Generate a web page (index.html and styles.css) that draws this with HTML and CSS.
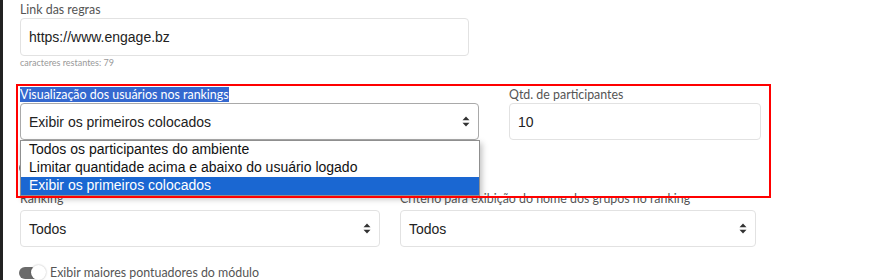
FILE: index.html
```html
<!DOCTYPE html>
<html lang="pt-BR">
<head>
    <meta charset="UTF-8">
    <meta name="viewport" content="width=device-width, initial-scale=1.0">
    <title>Configurações do ranking</title>
    <link rel="stylesheet" href="styles.css">
</head>
<body>
    <div class="pagina">
        <div class="barra-lateral"></div>
        <div class="conteudo">
            <div class="campo campo-link">
                <label class="rotulo" for="link">Link das regras</label>
                <div class="caixa caixa-link">https://www.engage.bz</div>
                <small class="contador">caracteres restantes: 79</small>
            </div>

            <div class="secao-destaque">
                <div class="linha linha-visualizacao">
                    <div class="campo">
                        <label class="rotulo"><span class="selecionado">Visualização dos usuários nos rankings</span></label>
                        <div class="caixa caixa-select focada">
                            <span>Exibir os primeiros colocados</span>
                            <svg class="setas" width="8" height="11" viewBox="0 0 8 11"><path d="M4 0.5 L7.5 4.2 H0.5 Z M4 10.5 L7.5 6.8 H0.5 Z" fill="#333"/></svg>
                        </div>
                        <ul class="lista-opcoes">
                            <li>Todos os participantes do ambiente</li>
                            <li>Limitar quantidade acima e abaixo do usuário logado</li>
                            <li class="ativa">Exibir os primeiros colocados</li>
                        </ul>
                    </div>
                    <div class="campo">
                        <label class="rotulo">Qtd. de participantes</label>
                        <div class="caixa">10</div>
                    </div>
                </div>

                <!-- chave coberta pela lista aberta -->
                <div class="chave-linha chave-oculta">
                    <span class="chave"><span class="bolinha"></span></span>
                </div>
                <div class="moldura-vermelha"></div>
            </div>

            <div class="linha linha-ranking">
                <div class="campo">
                    <label class="rotulo">Ranking</label>
                    <div class="caixa caixa-select">
                        <span>Todos</span>
                        <svg class="setas" width="8" height="11" viewBox="0 0 8 11"><path d="M4 0.5 L7.5 4.2 H0.5 Z M4 10.5 L7.5 6.8 H0.5 Z" fill="#333"/></svg>
                    </div>
                </div>
                <div class="campo">
                    <label class="rotulo">Critério para exibição do nome dos grupos no ranking</label>
                    <div class="caixa caixa-select">
                        <span>Todos</span>
                        <svg class="setas" width="8" height="11" viewBox="0 0 8 11"><path d="M4 0.5 L7.5 4.2 H0.5 Z M4 10.5 L7.5 6.8 H0.5 Z" fill="#333"/></svg>
                    </div>
                </div>
            </div>

            <div class="chave-linha">
                <span class="chave"><span class="bolinha"></span></span>
                <span class="chave-texto">Exibir maiores pontuadores do módulo</span>
            </div>
        </div>
    </div>
</body>
</html>
```

FILE: styles.css
```css
body{
    margin: 0;
    background-color: #fff;
    font-family: Lato, "Open Sans", sans-serif;
}

.pagina{
    display: flex;
    height: 280px;
    overflow: hidden;
}

.barra-lateral{
    width: 3px;
    background-color: #222;
    flex-shrink: 0;
}

.conteudo{
    flex: 1;
    padding: 2px 0 0 17px;
}

.campo{
    position: relative;
}

.rotulo{
    display: block;
    font-size: 12.4px;
    line-height: 16px;
    color: #555;
    margin-bottom: 0;
}

.caixa{
    box-sizing: border-box;
    height: 37px;
    border: 1px solid #e2e2e2;
    border-radius: 4px;
    padding: 0 8px;
    display: flex;
    align-items: center;
    justify-content: space-between;
    font-family: "Liberation Sans", Arial, sans-serif;
    font-size: 14px;
    color: #222;
}

.caixa-link{
    width: 449px;
    height: 38px;
}

.contador{
    display: block;
    font-size: 9px;
    line-height: 12px;
    color: #999;
    margin-top: 1px;
}

.secao-destaque{
    position: relative;
    margin-top: 18px;
}

.linha{
    display: grid;
}

.linha-visualizacao{
    grid-template-columns: 459px 252px;
    column-gap: 30px;
}

.linha-ranking{
    grid-template-columns: 360px 356px;
    column-gap: 20px;
}

.linha-ranking .rotulo{
    margin-bottom: 3px;
}

.selecionado{
    background-color: #3468cf;
    color: #fff;
}

.focada{
    border-color: #a9a9a9;
}

.lista-opcoes{
    position: absolute;
    top: 53px;
    left: 0;
    width: 460px;
    box-sizing: border-box;
    margin: 0;
    padding: 0;
    list-style: none;
    background-color: #fff;
    border: 1px solid #8f8f8f;
    box-shadow: 2px 3px 6px rgba(0, 0, 0, 0.25);
    font-family: "Liberation Sans", Arial, sans-serif;
    font-size: 14px;
    color: #111;
    z-index: 5;
}

.lista-opcoes li{
    height: 18px;
    line-height: 17px;
    padding-left: 8px;
}

.lista-opcoes li.ativa{
    background-color: #1a67d2;
    color: #fff;
}

.chave-linha{
    display: flex;
    align-items: center;
    gap: 5px;
    margin-left: -1px;
    height: 15px;
}

.chave-oculta{
    margin-top: 20px;
    margin-bottom: 16px;
}

.linha-ranking + .chave-linha{
    margin-top: 18px;
}

.chave{
    width: 26px;
    height: 12px;
    border-radius: 6px;
    background-color: #6b6b6b;
    position: relative;
    display: inline-block;
}

.bolinha{
    position: absolute;
    right: -1px;
    top: -2px;
    width: 15px;
    height: 15px;
    border-radius: 50%;
    background-color: #fff;
    box-shadow: 0 0 2px rgba(0, 0, 0, 0.3);
}

.chave-texto{
    font-size: 12.4px;
    color: #555;
}

.moldura-vermelha{
    position: absolute;
    top: -3px;
    left: -4px;
    width: 751px;
    height: 110px;
    border: 2px solid #f00;
    z-index: 6;
    pointer-events: none;
}
```
